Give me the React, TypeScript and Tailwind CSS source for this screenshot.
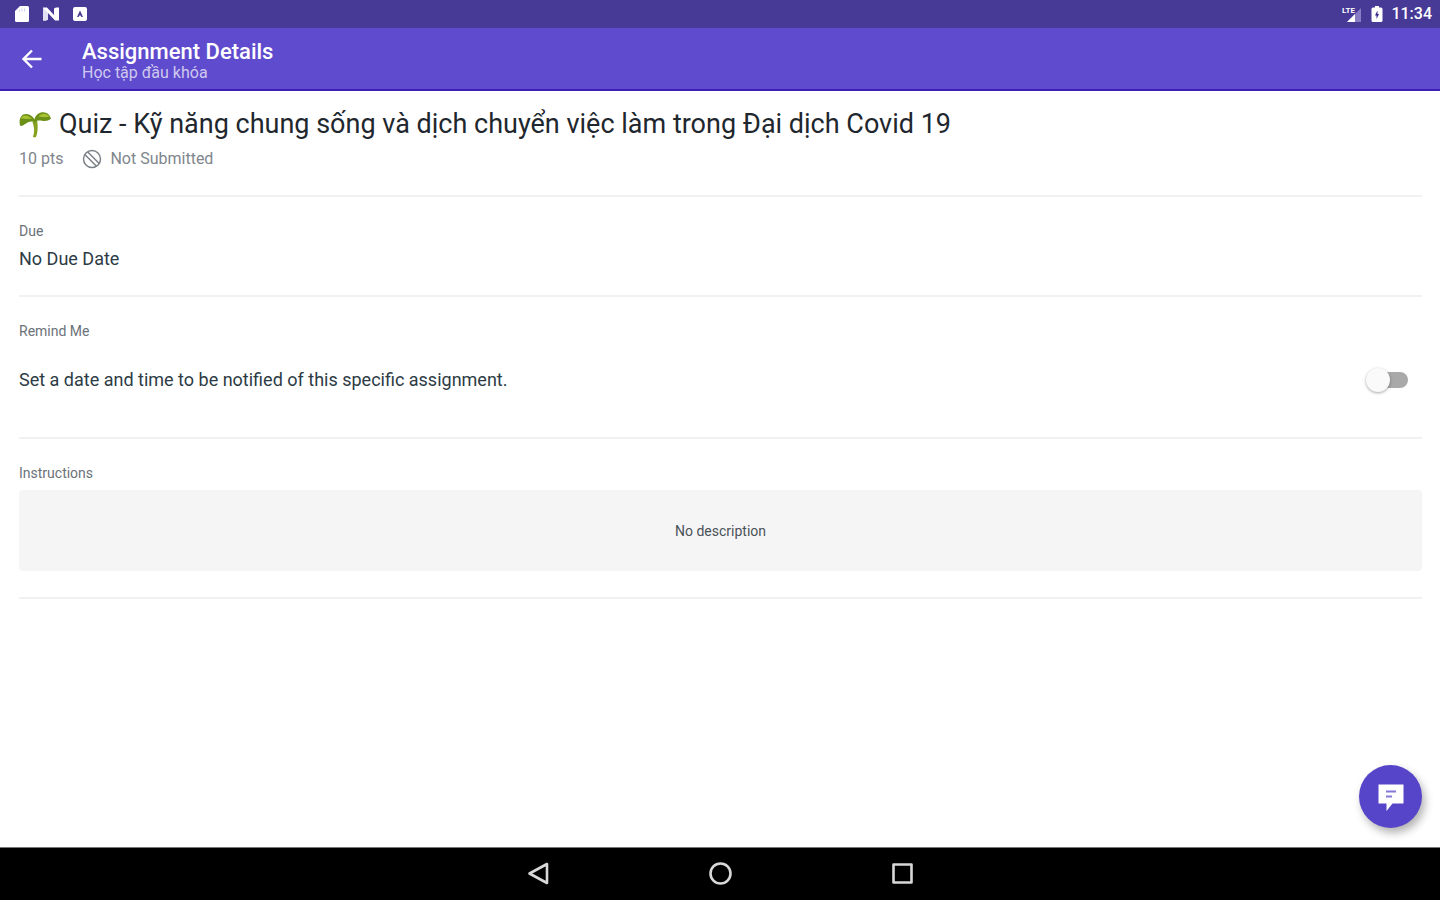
import { useState } from "react";
import type { ReactNode } from "react";

function SdCardIcon() {
    return (
        <svg className="h-4 w-4" viewBox="0 0 16 16" fill="#fff" aria-hidden="true">
            <path d="M6 0h7.500a1.500 1.500 0 0 1 1.500 1.500v13a1.500 1.500 0 0 1-1.500 1.500h-11a1.500 1.500 0 0 1-1.500-1.500V5z" />
            <path d="M5.500 3.500v2M8 2.500v3M10.500 2.500v3" stroke="#c9c4e6" strokeWidth="0.800" />
        </svg>
    );
}

function NougatIcon() {
    return (
        <svg className="h-4 w-[18px]" viewBox="0 0 18 16" aria-hidden="true">
            <path d="M1 1.500h4l7 7.500V2.500l2-1h3v13h-4L6 7v6.500l-2 1H1z" fill="#fff" />
            <path d="M1 1.500l5 5.500v6.500l-2 1H1z" fill="#e3e0f4" />
        </svg>
    );
}

function KeyboardIcon() {
    return (
        <svg className="h-4 w-4" viewBox="0 0 16 16" aria-hidden="true">
            <rect x="1" y="1" width="14" height="14" rx="2" fill="#fff" />
            <path d="M8 4.500l3 6.500H9.500L8 9l-1.500 2H5z" fill="#473996" />
        </svg>
    );
}

function SignalIcon() {
    return (
        <svg className="h-5 w-6" viewBox="0 0 24 20" aria-hidden="true">
            <text x="3" y="9" fontFamily="Roboto, sans-serif" fontSize="8" fontWeight="700" fill="#fff">
                LTE
            </text>
            <path d="M22 4v14H8z" fill="#887dc4" />
            <path d="M16 10v8H8z" fill="#fff" />
        </svg>
    );
}

function BatteryIcon() {
    return (
        <svg className="h-4 w-3" viewBox="0 0 12 16" aria-hidden="true">
            <path d="M4 0h4v1.500h2a1.500 1.500 0 0 1 1.500 1.500v11.500a1.500 1.500 0 0 1-1.500 1.500H2A1.500 1.500 0 0 1 .500 14.500V3A1.500 1.500 0 0 1 2 1.500h2z" fill="#fff" />
            <path d="M6.500 4.500v3.500h1.500L5.500 13V9.500H4z" fill="#332487" />
        </svg>
    );
}

function SeedlingIcon() {
    return (
        <svg className="h-8 w-8 shrink-0" viewBox="0 0 32 32" aria-hidden="true">
            <path d="M14 28.500c1.700-4 1.500-9-.5-14.500l4.500-2c1 5 1 12-.8 16.500-.6 1.200-3.600 1.200-3.200 0z" fill="#86a11f" />
            <path d="M1 17.500C-.5 10.500 2.500 5.500 7.500 6c4 .5 8 3.500 9.500 8.500-3.500-1.500-6-1-8.500 0C6 15.800 3.500 19 1 17.500z" fill="#6b9016" />
            <path d="M2 10C5 6 9.500 7.500 13 11 9 10.500 5 11.500 2 10z" fill="#a9c233" />
            <path d="M15 14.500c0-5 3-9.500 8-10.200 4.500-.5 7.500 1.700 9 6.200-2.500 2.500-6 2.700-9 2.200-3-.5-6-.2-8 1.800z" fill="#6b9016" />
            <path d="M19.500 8.500c2.500-3.500 7.500-4 11 0-3.500 1-7.500.7-11 0z" fill="#a9c233" />
        </svg>
    );
}

function StatusBar() {
    return (
        <div className="flex h-7 items-center justify-between bg-[#473996] pr-2 pl-[14px] text-white">
            <div className="flex items-center gap-3">
                <SdCardIcon />
                <NougatIcon />
                <KeyboardIcon />
            </div>
            <div className="flex items-center gap-2">
                <SignalIcon />
                <BatteryIcon />
                <span className="text-base leading-5 font-medium">11:34</span>
            </div>
        </div>
    );
}

function AppBar() {
    return (
        <header className="flex h-[63px] items-center border-b-2 border-[#3d1fb5] bg-[#5f4bcd] pl-5 text-white">
            <button type="button" aria-label="Back" className="mr-[38px] flex h-6 w-6 items-center justify-center">
                <svg className="h-6 w-6" viewBox="0 0 24 24" fill="none" stroke="#fff" strokeWidth="2.400" aria-hidden="true">
                    <path d="M21.500 12H4M12 3.500L3.500 12l8.500 8.500" />
                </svg>
            </button>
            <div className="flex flex-col pt-1">
                <h1 className="text-[22px] leading-6 font-medium">Assignment Details</h1>
                <p className="text-base leading-[18px] text-[#cfc9f0]">Học tập đầu khóa</p>
            </div>
        </header>
    );
}

function Section({ title, children }: { title: string; children: ReactNode }) {
    return (
        <section className="border-b-2 border-[#f0f1f2] py-[26px]">
            <h3 className="text-sm leading-4 text-[#6b7278]">{title}</h3>
            {children}
        </section>
    );
}

function NavBar() {
    return (
        <nav className="flex h-[53px] items-center justify-center gap-[154px] border-t border-[#777] bg-black">
            <button type="button" aria-label="Back" className="h-7 w-7">
                <svg viewBox="0 0 28 28" fill="none" stroke="#d8d8d8" strokeWidth="2.600" strokeLinejoin="round" aria-hidden="true">
                    <path d="M23 4v19L5.500 13.500z" />
                </svg>
            </button>
            <button type="button" aria-label="Home" className="h-7 w-7">
                <svg viewBox="0 0 28 28" fill="none" stroke="#d8d8d8" strokeWidth="2.600" aria-hidden="true">
                    <circle cx="14.500" cy="13.500" r="10" />
                </svg>
            </button>
            <button type="button" aria-label="Recent apps" className="h-7 w-7">
                <svg viewBox="0 0 28 28" fill="none" stroke="#d8d8d8" strokeWidth="2.600" strokeLinejoin="round" aria-hidden="true">
                    <rect x="5.500" y="4.500" width="18" height="18" />
                </svg>
            </button>
        </nav>
    );
}

export default function App() {
    const [remind, setRemind] = useState(false);

    return (
        <div className="flex min-h-screen flex-col bg-white font-['Roboto','Noto_Sans',sans-serif]">
            <StatusBar />
            <AppBar />
            <main className="relative grow pr-[18px] pl-[19px]">
                <section className="border-b-2 border-[#f0f1f2] pt-[17px] pb-[26px]">
                    <div className="flex items-center gap-2">
                        <SeedlingIcon />
                        <h2 className="text-[27px] leading-8 text-[#1f272e]">
                            Quiz - Kỹ năng chung sống và dịch chuyển việc làm trong Đại dịch Covid 19
                        </h2>
                    </div>
                    <div className="mt-[9px] flex items-center text-base leading-5 text-[#80868c]">
                        <span>10 pts</span>
                        <svg className="mr-2 ml-[19px] h-5 w-5" viewBox="0 0 20 20" fill="none" stroke="#7b8187" strokeWidth="1.500" aria-hidden="true">
                            <circle cx="10" cy="10" r="8.500" />
                            <path d="M5.500 2.800L17.200 14.500M2.800 5.500l11.700 11.700" />
                        </svg>
                        <span>Not Submitted</span>
                    </div>
                </section>

                <Section title="Due">
                    <p className="mt-[10px] text-lg leading-5 text-[#2d3b45]">No Due Date</p>
                </Section>

                <Section title="Remind Me">
                    <label className="mt-[27px] mb-[17px] flex h-7 items-center justify-between pr-[14px]">
                        <span className="text-lg leading-5 text-[#2d3b45]">
                            Set a date and time to be notified of this specific assignment.
                        </span>
                        <span className="relative flex h-6 w-[42px] shrink-0 items-center justify-end">
                            <input
                                type="checkbox"
                                role="switch"
                                className="peer h-4 w-9 appearance-none rounded-full bg-[#a9a9a9] checked:bg-[#a89ce8]"
                                checked={remind}
                                onChange={(e) => setRemind(e.target.checked)}
                            />
                            <span className="pointer-events-none absolute top-0 left-0 h-6 w-6 rounded-full bg-[#fafafa] shadow-[0_1px_3px_rgba(0,0,0,0.35)] peer-checked:right-0 peer-checked:left-auto peer-checked:bg-[#5f4bcd]" />
                        </span>
                    </label>
                </Section>

                <Section title="Instructions">
                    <div className="mt-[9px] flex h-[81px] items-center justify-center rounded bg-[#f5f5f5] text-sm leading-4 text-[#4a5259]">
                        No description
                    </div>
                </Section>

                <button
                    type="button"
                    aria-label="Comments"
                    className="absolute right-[18px] bottom-[19px] flex h-[63px] w-[63px] items-center justify-center rounded-full bg-[#5645c8] shadow-[3px_5px_8px_rgba(0,0,0,0.3)]"
                >
                    <svg className="h-8 w-8" viewBox="0 0 32 32" aria-hidden="true">
                        <path d="M3.500 3.500h25v19h-11l-6 7.500v-7.500h-8z" fill="#fff" />
                        <path d="M11 10.500h10M11 15.500h6" stroke="#8478d8" strokeWidth="2" />
                    </svg>
                </button>
            </main>
            <NavBar />
        </div>
    );
}
